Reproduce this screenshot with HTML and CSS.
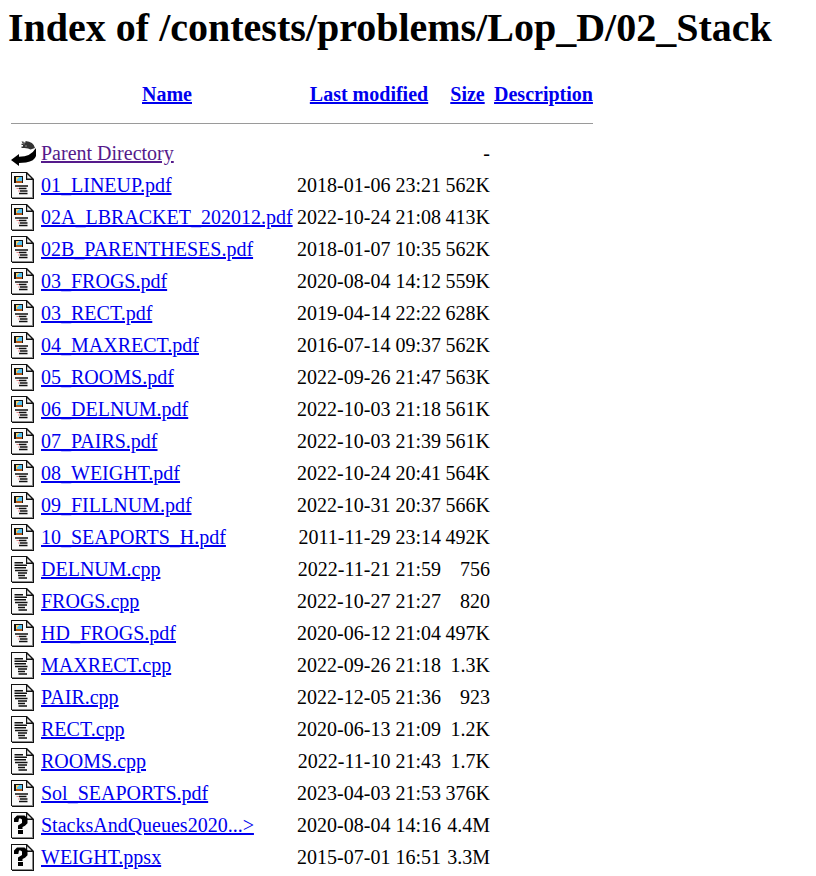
FILE: index.html
```
<!DOCTYPE html>
<html lang="en">
<head>
<meta charset="utf-8">
<title>Index of /contests/problems/Lop_D/02_Stack</title>
<link rel="stylesheet" href="styles.css">
</head>
<body>
<svg class="defs" width="0" height="0" aria-hidden="true">
<symbol id="page" viewBox="0 0 26 28">
<path fill="#111" d="M0 0h16l7 7v20H1V26H0z"/>
<path fill="#888" d="M21 8h1v18H1v-1h20z"/>
<path fill="#fafafa" d="M1 1h14v7h6v17H1z"/>
<path fill="#eee" d="M16.200 2.200L20.500 6.500h-4.300z"/>
</symbol>
<symbol id="text" viewBox="0 0 26 28">
<use href="#page"/>
<path stroke="#111" stroke-width="1.500" d="M3.500 6.700H12M3.500 9.200h12.500M3.500 11.800H15M4 14.400h12.500M7 17h9M7 19.500h7M7.500 22H16"/>
</symbol>
<symbol id="layout" viewBox="0 0 26 28">
<use href="#page"/>
<path fill="#111" d="M3 4h9v7H3z"/>
<path fill="#55c4f4" d="M5 5h6v4H5z"/>
<path fill="#f4d070" d="M5 5h3v1H7v1H6v2H5z"/>
<path fill="#b65a16" d="M5 9h6v2H5z"/>
<path stroke="#111" stroke-width="1.300" d="M4 14h13M8 16.500h7.500M9 19h7.500M8 21.500h8.500"/>
<path stroke="#d88" stroke-width="1.200" d="M5.500 16.500H8M7 19h2"/>
</symbol>
<symbol id="unknown" viewBox="0 0 26 28">
<use href="#page"/>
<path fill="#000" d="M3 10V6.500L6 3.500h7.500l3 2.800v5l-2.500 2.500-2.500 1.200v2H7v-3.500l4-2.500V7.500L9.500 6.500H8L7.300 10zM7 18h5v4H7z"/>
</symbol>
<symbol id="back" viewBox="0 0 26 28">
<path fill="#333" d="M10.500 1.500h2v1h2V1q8 .5 9.500 7l-4.500 1.500q-2-1.500-6-1.500h-3V6.500H12V5h-1.500V3.700h1.500z"/>
<path fill="#000" d="M25 8.500V16q-1.500 5-10 6.500l-7 .5v3L0 20l8-6v2.700q12 0 16.500-8.200z"/>
<path stroke="#aaa" stroke-width=".8" d="M13 3v1.500M15 5v2"/>
</symbol>
</svg>
<h1>Index of /contests/problems/Lop_D/02_Stack</h1>
<table>
<colgroup><col class="c-icon"><col class="c-name"><col class="c-date"><col class="c-size"><col class="c-desc"></colgroup>
<thead>
<tr><th></th><th><a href="#n">Name</a></th><th><a href="#m">Last modified</a></th><th><a href="#s">Size</a></th><th><a href="#d">Description</a></th></tr>
<tr><th colspan="5"><hr></th></tr>
</thead>
<tbody id="files"></tbody>
</table>
<script src="script.js"></script>
</body>
</html>
```
FILE: styles.css
```
body {
  margin: 8px;
  background: #fff;
  color: #000;
  font: 20px "Liberation Serif", "Times New Roman", serif;
}
.defs { display: block; }
h1 {
  margin: -3px 0 29px;
  font-size: 40px;
  line-height: 46px;
  white-space: nowrap;
}
table {
  width: 588px;
  table-layout: fixed;
  border-spacing: 2px;
}
th, td {
  padding: 1px;
  line-height: 23px;
  white-space: nowrap;
}
td {
  height: 28px;
  padding: 0 1px 2px;
  line-height: 24px;
  vertical-align: middle;
}
.c-icon { width: 28px; }
.c-name { width: 254px; }
.c-date { width: 146px; }
.c-size { width: 47px; }
.c-desc { width: 101px; }
.date, .size { text-align: right; }
.icon { display: block; width: 26px; height: 28px; position: relative; top: 1px; }
a { color: #0000ee; }
a.visited { color: #551a8b; }
hr {
  height: 1px;
  margin: 13px 0 12px;
  border: 0;
  background: #9a9a9a;
}
```
FILE: script.js
```
const files = [
  ["back", "Parent Directory", "", "-"],
  ["layout", "01_LINEUP.pdf", "2018-01-06 23:21", "562K"],
  ["layout", "02A_LBRACKET_202012.pdf", "2022-10-24 21:08", "413K"],
  ["layout", "02B_PARENTHESES.pdf", "2018-01-07 10:35", "562K"],
  ["layout", "03_FROGS.pdf", "2020-08-04 14:12", "559K"],
  ["layout", "03_RECT.pdf", "2019-04-14 22:22", "628K"],
  ["layout", "04_MAXRECT.pdf", "2016-07-14 09:37", "562K"],
  ["layout", "05_ROOMS.pdf", "2022-09-26 21:47", "563K"],
  ["layout", "06_DELNUM.pdf", "2022-10-03 21:18", "561K"],
  ["layout", "07_PAIRS.pdf", "2022-10-03 21:39", "561K"],
  ["layout", "08_WEIGHT.pdf", "2022-10-24 20:41", "564K"],
  ["layout", "09_FILLNUM.pdf", "2022-10-31 20:37", "566K"],
  ["layout", "10_SEAPORTS_H.pdf", "2011-11-29 23:14", "492K"],
  ["text", "DELNUM.cpp", "2022-11-21 21:59", "756"],
  ["text", "FROGS.cpp", "2022-10-27 21:27", "820"],
  ["layout", "HD_FROGS.pdf", "2020-06-12 21:04", "497K"],
  ["text", "MAXRECT.cpp", "2022-09-26 21:18", "1.3K"],
  ["text", "PAIR.cpp", "2022-12-05 21:36", "923"],
  ["text", "RECT.cpp", "2020-06-13 21:09", "1.2K"],
  ["text", "ROOMS.cpp", "2022-11-10 21:43", "1.7K"],
  ["layout", "Sol_SEAPORTS.pdf", "2023-04-03 21:53", "376K"],
  ["unknown", "StacksAndQueues2020...&gt;", "2020-08-04 14:16", "4.4M"],
  ["unknown", "WEIGHT.ppsx", "2015-07-01 16:51", "3.3M"]
];
document.getElementById("files").innerHTML = files.map(([icon, name, date, size]) =>
  `<tr><td><svg class="icon"><use href="#${icon}"/></svg></td>` +
  `<td><a href="#f"${icon === "back" ? ' class="visited"' : ""}>${name}</a></td>` +
  `<td class="date">${date}</td><td class="size">${size}</td><td></td></tr>`
).join("");
```
